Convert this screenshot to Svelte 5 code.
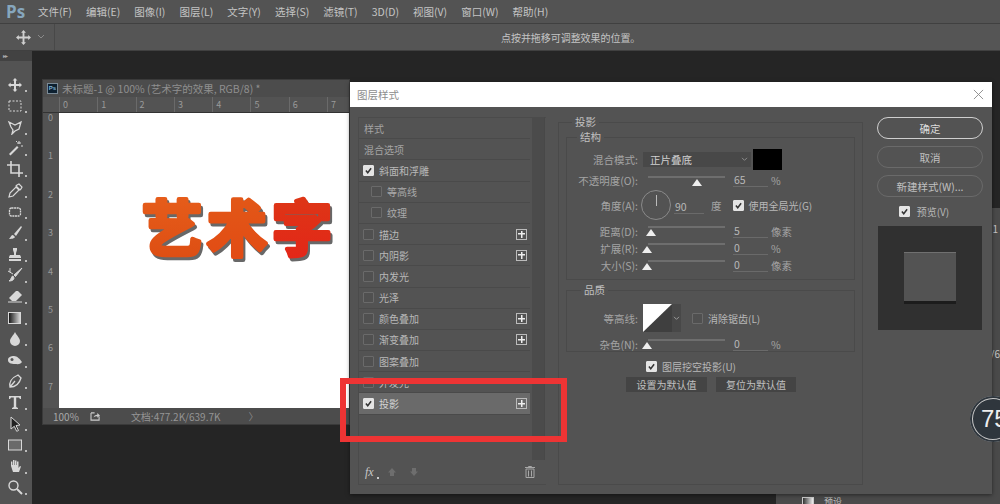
<script>
  const menus = ['文件(F)', '编辑(E)', '图像(I)', '图层(L)', '文字(Y)', '选择(S)', '滤镜(T)', '3D(D)', '视图(V)', '窗口(W)', '帮助(H)'];
  const styles = [
    { label: '样式', head: true },
    { label: '混合选项', head: true },
    { label: '斜面和浮雕', on: true },
    { label: '等高线', sub: true },
    { label: '纹理', sub: true },
    { label: '描边', plus: true },
    { label: '内阴影', plus: true },
    { label: '内发光' },
    { label: '光泽' },
    { label: '颜色叠加', plus: true },
    { label: '渐变叠加', plus: true },
    { label: '图案叠加' },
    { label: '外发光' },
    { label: '投影', on: true, plus: true, active: true }
  ];
  const rulerX = [0, 1, 2, 3, 4, 5, 6, 7];
  const tools = ['move', 'marquee', 'lasso', 'wand', 'crop', 'dropper', 'heal', 'brush', 'stamp', 'history', 'eraser', 'gradient', 'drop', 'smudge', 'pen', 'type', 'arrow', 'rect', 'hand', 'zoom'];
</script>

<div class="app">
  <header class="menubar">
    <span class="logo">Ps</span>
    <nav class="menus">
      {#each menus as m}<span>{m}</span>{/each}
    </nav>
  </header>
  <div class="optionbar">
    <svg class="opt-move" viewBox="0 0 16 16"><path d="M8 0l2.600 3H9v4h4V5.400L16 8l-3 2.600V9H9v4h1.600L8 16l-2.600-3H7V9H3v1.600L0 8l3-2.600V7h4V3H5.400z" fill="#d0d0d0"/></svg>
    <svg class="opt-chev" viewBox="0 0 8 6"><path d="M1 1l3 3 3-3" fill="none" stroke="#8a8a8a" stroke-width="1"/></svg>
    <span class="opt-div"></span>
    <span class="opt-msg">点按并拖移可调整效果的位置。</span>
  </div>
  <div class="workspace">
    <aside class="tools">
      <div class="tools-head">▸▸</div>
      <div class="tool-list">
        {#each tools as t}
          <div class="tool">
            <svg viewBox="0 0 16 16" width="16" height="16">
              {#if t === 'move'}<path d="M8 1l2.400 2.600H9V7h3.400V5.600L15 8l-2.600 2.400V9H9v3.400h1.400L8 15l-2.400-2.600H7V9H3.600v1.400L1 8l2.600-2.400V7H7V3.600H5.600z" fill="#d8d8d8"/>
              {:else if t === 'marquee'}<rect x="2" y="3" width="12" height="10" fill="none" stroke="#d8d8d8" stroke-dasharray="2 1.500"/>
              {:else if t === 'lasso'}<path d="M2 3l6 3 6-3-2 7-4 2-3 3 1-4-2-3z" fill="none" stroke="#d8d8d8" stroke-width="1.300"/>
              {:else if t === 'wand'}<path d="M2 14l8-8 1.500 1.500-8 8z" fill="#d8d8d8"/><path d="M12 1v3M10 3h4M14 6h2M9 1l1 1" stroke="#d8d8d8"/>
              {:else if t === 'crop'}<path d="M4 0v12h12M0 4h12v12" fill="none" stroke="#d8d8d8" stroke-width="1.600"/>
              {:else if t === 'dropper'}<path d="M2 14l1-4 6-6 3 3-6 6zM10 2l2-1 3 3-1 2-1 1-4-4z" fill="none" stroke="#d8d8d8" stroke-width="1.200"/>
              {:else if t === 'heal'}<rect x="2.500" y="4" width="11" height="8" rx="2" fill="none" stroke="#d8d8d8" stroke-width="1.300" stroke-dasharray="2 .6"/>
              {:else if t === 'brush'}<path d="M14 1L7 9l2 2 6-9zM6 10c-2 0-2 2-4 4 3 0 6-1 6-2z" fill="#d8d8d8"/>
              {:else if t === 'stamp'}<path d="M6 2h4v2l-1 3v2h4l1 2v1H2v-1l1-2h4V7L6 4zM2 13h12v2H2z" fill="#d8d8d8"/>
              {:else if t === 'history'}<path d="M15 1L7 8l1.500 1.500zM6 9c-2 0-1 3-4 5 3 0 5-1 5-3zM1 4l5 3M3 1v4" stroke="#d8d8d8" fill="#d8d8d8"/>
              {:else if t === 'eraser'}<path d="M2 10l7-7h2l4 4-6 6H5z" fill="#d8d8d8"/><path d="M1 14h14" stroke="#d8d8d8"/>
              {:else if t === 'gradient'}<defs><linearGradient id="gr"><stop offset="0" stop-color="#111"/><stop offset="1" stop-color="#ddd"/></linearGradient></defs><rect x="1.500" y="2.500" width="12" height="11" fill="url(#gr)" stroke="#d8d8d8"/>
              {:else if t === 'drop'}<path d="M8 1c2 4 5 6 5 9a5 5 0 0 1-10 0c0-3 3-5 5-9z" fill="#d8d8d8"/>
              {:else if t === 'smudge'}<path d="M1 8c0-3 3-4 6-4 3 0 6 3 8 6-2 3-5 2-7 2-4 0-7-1-7-4z" fill="#d8d8d8"/><circle cx="5" cy="7.500" r="1.500" fill="#555"/>
              {:else if t === 'pen'}<path d="M3 14c-1-4 1-9 8-12l3 3c-2 7-7 9-11 9z M3 14l5-6" fill="none" stroke="#d8d8d8" stroke-width="1.300"/>
              {:else if t === 'type'}<path d="M2 2h12v3h-1l-1-1.500H9.200v9.500L11 14v1H5v-1l1.800-1V3.500H4L3 5H2z" fill="#d8d8d8"/>
              {:else if t === 'arrow'}<path d="M4 1l9 8-4 .5 2.500 5-1.800.8-2.400-5L4 13z" fill="#222" stroke="#d8d8d8"/>
              {:else if t === 'rect'}<rect x="1.500" y="3" width="13" height="10" fill="#6a6a6a" stroke="#d8d8d8"/>
              {:else if t === 'hand'}<path d="M4 8V3.500h1.400V7h.6V2h1.500v5h.5V2.500h1.500V7h.5V3.500H11.500V10l1.500-2 1 .5-2 5.500H6z" fill="#d8d8d8"/>
              {:else}<circle cx="6.500" cy="6.500" r="4.500" fill="none" stroke="#d8d8d8" stroke-width="1.400"/><path d="M10 10l5 5" stroke="#d8d8d8" stroke-width="2"/>
              {/if}
            </svg>
            <i class="corner"></i>
          </div>
        {/each}
      </div>
    </aside>
    <div class="desk">
      <section class="doc">
        <div class="doc-title">
          <span class="ps-badge">Ps</span>
          <span>未标题-1 @ 100% (艺术字的效果, RGB/8) *</span>
        </div>
        <div class="ruler-h">
          {#each rulerX as n}<span>{n}</span>{/each}
        </div>
        <div class="doc-main">
          <div class="ruler-v">
            {#each rulerX as n}<span>{n}</span>{/each}
          </div>
          <div class="paper">
            <svg class="art" viewBox="0 0 290 295" width="290" height="295">
              <defs>
                <linearGradient id="ga" x1="0" y1="0" x2="0" y2="1"><stop offset="0" stop-color="#e8601c"/><stop offset="1" stop-color="#dc4c12"/></linearGradient>
                <linearGradient id="gb" x1="0" y1="0" x2="0" y2="1"><stop offset="0" stop-color="#e25a18"/><stop offset="1" stop-color="#e24a14"/></linearGradient>
                <linearGradient id="gc" x1="0" y1="0" x2="0" y2="1"><stop offset="0" stop-color="#dc3a16"/><stop offset="1" stop-color="#e42418"/></linearGradient>
              </defs>
              <text x="83" y="138" fill="url(#ga)" stroke="url(#ga)">艺</text>
              <text x="148" y="138" fill="url(#gb)" stroke="url(#gb)">术</text>
              <text x="213" y="138" fill="url(#gc)" stroke="url(#gc)">字</text>
            </svg>
          </div>
        </div>
        <div class="doc-status">
          <span class="zoom">100%</span>
          <svg viewBox="0 0 12 10" width="11" height="9"><path d="M1 1h4M1 1v8h9V5" fill="none" stroke="#ccc" stroke-width="1.200"/><path d="M4 6c0-2 2-3 4-3V1l3 3-3 2.500V4.800C6 4.800 5 5 4 6z" fill="#ccc"/></svg>
          <span class="docinfo">文档:477.2K/639.7K</span>
          <span class="chev">〉</span>
        </div>
      </section>

      <aside class="side-panel">
        <span class="side-mark m1">1</span>
        <span class="side-mark m2">/6</span>
        <div class="side-bottom"><i></i><span>预设</span></div>
      </aside>

      <section class="dialog">
        <div class="dlg-title">
          <span>图层样式</span>
          <svg viewBox="0 0 12 12" width="11" height="11"><path d="M1 1l10 10M11 1L1 11" stroke="#8a8a8a" stroke-width="1"/></svg>
        </div>
        <div class="dlg-body">
          <div class="list-col">
            <div class="style-list">
              {#each styles as s}
                <div class="row" class:active={s.active} class:sub={s.sub} class:head={s.head}>
                  {#if !s.head}<span class="cb" class:on={s.on}>{#if s.on}<svg viewBox="0 0 12 12"><path d="M2.500 6l2.500 3 4.500-6" fill="none" stroke="#333" stroke-width="2"/></svg>{/if}</span>{/if}
                  <span class="rlabel">{s.label}</span>
                  {#if s.plus}<span class="plus"></span>{/if}
                </div>
              {/each}
              <div class="list-foot">
                <span class="fx">fx<i></i></span>
                <svg viewBox="0 0 10 10" width="10" height="10"><path d="M5 1l4 4.500H7V9H3V5.500H1z" fill="#6e6e6e"/></svg>
                <svg class="down" viewBox="0 0 10 10" width="10" height="10"><path d="M5 9l4-4.500H7V1H3v3.500H1z" fill="#6e6e6e"/></svg>
                <svg class="trash" viewBox="0 0 10 12" width="10" height="12"><path d="M1 3h8v8.500H1zM0 1.500h10M3.500 1.500V.5h3v1M3.500 4.500v6M6.500 4.500v6" fill="none" stroke="#a8a8a8"/></svg>
              </div>
            </div>
            <div class="list-scroll"></div>
          </div>

          <fieldset class="outer">
            <legend>投影</legend>
            <fieldset class="group g1">
              <legend>结构</legend>
              <div class="form-row r-blend">
                <label>混合模式:</label>
                <span class="select"><b>正片叠底</b><svg viewBox="0 0 8 6" width="7" height="5"><path d="M1 1l3 3 3-3" fill="none" stroke="#999"/></svg></span>
                <span class="swatch"></span>
              </div>
              <div class="form-row r-op">
                <label>不透明度(O):</label>
                <span class="slider"><i class="thumb t-op"></i></span>
                <span class="num">65</span><span class="unit">%</span>
              </div>
              <div class="form-row r-angle">
                <label>角度(A):</label>
                <span class="dial"></span>
                <span class="num n-angle">90</span>
                <span class="unit u-angle">度</span>
                <span class="cb on"><svg viewBox="0 0 12 12"><path d="M2.500 6l2.500 3 4.500-6" fill="none" stroke="#333" stroke-width="2"/></svg></span>
                <span class="cblabel">使用全局光(G)</span>
              </div>
              <div class="form-row r-dist">
                <label>距离(D):</label>
                <span class="slider"><i class="thumb t-dist"></i></span>
                <span class="num">5</span><span class="unit">像素</span>
              </div>
              <div class="form-row r-small">
                <label>扩展(R):</label>
                <span class="slider"><i class="thumb t-zero"></i></span>
                <span class="num">0</span><span class="unit">%</span>
              </div>
              <div class="form-row r-small">
                <label>大小(S):</label>
                <span class="slider"><i class="thumb t-zero"></i></span>
                <span class="num">0</span><span class="unit">像素</span>
              </div>
            </fieldset>
            <fieldset class="group g2">
              <legend>品质</legend>
              <div class="form-row r-contour">
                <label>等高线:</label>
                <span class="contour"><svg viewBox="0 0 29 28" width="29" height="28"><rect width="29" height="28" fill="#fff"/><path d="M29 0v28H0z" fill="#3f3f3f"/></svg></span>
                <span class="contour-arrow"><svg viewBox="0 0 8 6" width="7" height="5"><path d="M1 1l3 3 3-3" fill="none" stroke="#aaa"/></svg></span>
                <span class="cb"></span>
                <span class="cblabel">消除锯齿(L)</span>
              </div>
              <div class="form-row r-noise">
                <label>杂色(N):</label>
                <span class="slider"><i class="thumb t-zero"></i></span>
                <span class="num">0</span><span class="unit">%</span>
              </div>
            </fieldset>
            <div class="knock">
              <span class="cb on"><svg viewBox="0 0 12 12"><path d="M2.500 6l2.500 3 4.500-6" fill="none" stroke="#333" stroke-width="2"/></svg></span>
              <span>图层挖空投影(U)</span>
            </div>
            <div class="defaults">
              <button>设置为默认值</button>
              <button>复位为默认值</button>
            </div>
          </fieldset>

          <div class="btn-col">
            <button class="pill primary">确定</button>
            <button class="pill">取消</button>
            <button class="pill">新建样式(W)...</button>
            <div class="preview-check">
              <span class="cb on"><svg viewBox="0 0 12 12"><path d="M2.500 6l2.500 3 4.500-6" fill="none" stroke="#333" stroke-width="2"/></svg></span>
              <span>预览(V)</span>
            </div>
            <div class="preview"><div class="swatch-prev"></div></div>
          </div>
        </div>
      </section>

      <div class="redbox"></div>
      <div class="meter"><span>75</span></div>
    </div>
  </div>
</div>

<style>
  :global(body) { margin: 0; background: #252525; }
  .app {
    width: 1000px; height: 504px; overflow: hidden; display: flex; flex-direction: column;
    font-family: "Noto Sans CJK SC", "Liberation Sans", sans-serif; font-size: 11px; color: #c0c0c0;
    background: #252525;
  }
  .menubar { height: 23px; flex: none; display: flex; align-items: center; background: #535353; border-bottom: 1px solid #404040; }
  .logo { width: 38px; padding-left: 6px; box-sizing: border-box; font: 700 17px "Open Sans", sans-serif; color: #86a6bd; }
  .menus { display: flex; gap: 14px; font-size: 10.500px; color: #c4c4c4; }
  .optionbar { height: 26px; flex: none; display: flex; align-items: center; background: #555; border-bottom: 1px solid #404040; position: relative; }
  .opt-move { width: 15px; height: 15px; margin-left: 16px; }
  .opt-chev { width: 8px; height: 6px; margin-left: 6px; }
  .opt-div { width: 1px; height: 26px; background: #484848; margin-left: 9px; }
  .opt-msg { margin-left: 446px; font-size: 10px; letter-spacing: -.05px; color: #c4c4c4; }
  .workspace { flex: 1; min-height: 0; display: flex; }
  .tools { width: 32px; flex: none; background: #535353; display: flex; flex-direction: column; }
  .tools-head { height: 10px; font-size: 6px; line-height: 10px; color: #aaa; padding-left: 3px; background: #424242; letter-spacing: -1px; }
  .tool-list { padding-top: 13px; display: flex; flex-direction: column; }
  .tool { height: 21.200px; display: flex; align-items: center; padding-left: 7px; position: relative; }
  .corner { position: absolute; left: 25px; bottom: 3px; width: 2px; height: 2px; background: #bbb; }
  .desk { flex: 1; position: relative; min-width: 0; }

  .doc { position: absolute; left: 11px; top: 29px; width: 306px; height: 344px; background: #535353; display: flex; flex-direction: column; box-shadow: 0 0 0 1px #3a3a3a; }
  .doc-title { height: 17px; display: flex; align-items: center; gap: 4px; padding-left: 4px; background: #4c4c4c; color: #8f8f8f; font-size: 10.500px; flex: none; }
  .ps-badge { width: 11px; height: 11px; background: #0d2030; color: #7fb2d4; border: 1px solid #7a8a96; box-sizing: border-box; font: 700 6px/9px "Liberation Sans", sans-serif; text-align: center; }
  .ruler-h { height: 16px; flex: none; background: #535353 repeating-linear-gradient(90deg, #6a6a6a 0 1px, transparent 1px 38.300px); background-position: 16px 0; padding-left: 20px; display: flex; box-sizing: border-box; border-bottom: 1px solid #333; font-size: 9px; line-height: 16px; color: #9a9a9a; }
  .ruler-h span { width: 38.300px; flex: none; }
  .doc-main { flex: 1; min-height: 0; display: flex; }
  .ruler-v { width: 16px; flex: none; background: #535353; display: flex; flex-direction: column; font-size: 9px; color: #9a9a9a; padding-left: 5px; box-sizing: border-box; }
  .ruler-v span { height: 38.400px; flex: none; line-height: 10px; }
  .paper { flex: 1; background: #fff; position: relative; }
  .art { position: absolute; left: 0; top: 0; filter: drop-shadow(2px 3px 0 #686868); overflow: visible; }
  .art text { font: 700 60px "Noto Sans CJK SC", sans-serif; stroke-width: 4.500px; stroke-linejoin: round; stroke-linecap: round; paint-order: stroke fill; }
  .doc-status { height: 16px; flex: none; display: flex; align-items: center; background: #4c4c4c; color: #a8a8a8; font-size: 10px; padding-left: 10px; }
  .doc-status svg { margin-left: 11px; }
  .docinfo { margin-left: 30px; color: #959595; }
  .chev { margin-left: 28px; color: #888; }

  .side-panel { position: absolute; right: 0; top: 157px; bottom: 0; width: 224px; background: #4a4a4a; }
  .side-mark { position: absolute; right: 2px; color: #c4c4c4; font-size: 10px; line-height: 10px; }
  .m1 { top: 16px; }
  .m2 { top: 141px; right: 0; }
  .side-bottom { position: absolute; left: 26px; bottom: -2px; display: flex; gap: 10px; align-items: center; font-size: 9px; line-height: 9px; color: #c0c0c0; }
  .side-bottom i { width: 12px; height: 9px; background: linear-gradient(90deg, #333, #eee); border: 1px solid #ccc; box-sizing: border-box; }

  .dialog { position: absolute; left: 318px; top: 31px; width: 642px; height: 412px; background: #535353; display: flex; flex-direction: column; box-shadow: 0 1px 4px rgba(0,0,0,.5); }
  .dlg-title { height: 25px; flex: none; background: #fff; color: #8d8d8d; font-size: 10.500px; display: flex; align-items: center; justify-content: space-between; padding: 0 8px 0 7px; }
  .dlg-body { flex: 1; display: flex; padding: 10px 6px 9px 8px; }
  .list-col { width: 187px; flex: none; display: flex; }
  .style-list { flex: 1; border: 1px solid #4b4b4b; border-right: none; display: flex; flex-direction: column; min-width: 0; }
  .row { height: 21.200px; flex: none; display: flex; align-items: center; gap: 5px; padding-left: 4px; border-bottom: 1px solid #4a4a4a; box-sizing: border-box; color: #b8b8b8; font-size: 10px; margin-right: 16px; }
  .row.head { padding-left: 5px; color: #a4a4a4; }
  .row.sub { padding-left: 12px; color: #aaa; }
  .row.active { background: #6a6a6a; color: #d4d4d4; }
  .rlabel { flex: 1; }
  .cb { width: 11px; height: 11px; flex: none; box-sizing: border-box; border: 1px solid #6a6a6a; background: #505050; display: inline-block; border-radius: 1px; }
  .cb.on { background: #e4e4e4; border-color: #e4e4e4; }
  .cb svg { display: block; width: 9px; height: 9px; }
  .plus { width: 11px; height: 11px; flex: none; margin-right: 3px; border: 1px solid #bbb; box-sizing: border-box; background: linear-gradient(#eee, #eee) center/7px 1.500px no-repeat, linear-gradient(#eee, #eee) center/1.500px 7px no-repeat; }
  .list-foot { margin-top: auto; height: 24px; display: flex; align-items: center; gap: 8px; padding: 0 6px 0 6px; }
  .fx { font: italic 12px "Liberation Serif", serif; color: #c8c8c8; position: relative; width: 14px; }
  .fx i { position: absolute; right: 0; bottom: 1px; width: 2px; height: 2px; background: #ccc; }
  .down { margin-left: 4px; }
  .trash { margin-left: auto; margin-right: 5px; }
  .list-scroll { width: 13px; flex: none; background: #4b4b4b; border-right: 1px solid #484848; margin-left: -14px; margin-bottom: 25px; box-sizing: border-box; }

  fieldset { margin: 0; min-width: 0; box-sizing: border-box; border: 1px solid #4a4a4a; }
  .outer { width: 305px; flex: none; margin: -2px 0 0 13px; padding: 0 7px 0 7px; align-self: stretch; }
  legend { padding: 0 3px; font-size: 10.500px; line-height: 14px; color: #c0c0c0; }
  .outer > legend { margin-left: 6px; }
  .group { padding: 0; margin-top: 1px; }
  .group legend { margin-left: 10px; }
  .g1 { height: 150px; padding-top: 5px; }
  .g2 { height: 69px; margin-top: 3px; padding-top: 4px; }
  .g2 legend { margin-left: 14px; }

  .form-row { display: flex; align-items: center; color: #a4a4a4; font-size: 10.500px; }
  .form-row label { width: 71px; flex: none; text-align: right; white-space: nowrap; }
  .r-blend { height: 21px; }
  .r-op { height: 21px; }
  .r-angle { height: 30px; margin-top: -1px; }
  .r-dist { height: 18px; margin-top: 2px; }
  .r-small { height: 17px; }
  .select { width: 108px; height: 15px; margin-left: 5px; background: #484848; display: flex; align-items: center; justify-content: space-between; padding: 0 3px 0 7px; box-sizing: border-box; }
  .select b { font-weight: 400; color: #d0d0d0; }
  .swatch { width: 29px; height: 21px; margin-left: 2px; background: #000; box-sizing: border-box; }
  .slider { width: 77px; height: 2px; margin-left: 10px; margin-bottom: 9px; background: #6e6e6e; position: relative; flex: none; }
  .r-op .slider { margin-bottom: 7px; }
  .thumb { position: absolute; top: 3px; width: 0; height: 0; border-left: 5px solid transparent; border-right: 5px solid transparent; border-bottom: 7px solid #eee; transform: translateX(-5px); }
  .t-op { left: 49px; }
  .t-dist { left: 3px; }
  .t-zero { left: -1px; }
  .num { width: 35px; margin-left: 8px; border-bottom: 1px solid #6a6a6a; height: 13px; line-height: 12px; padding-left: 1px; box-sizing: border-box; flex: none; color: #b8b8b8; }
  .unit { margin-left: 3px; color: #a4a4a4; }
  .dial { width: 30px; height: 30px; margin-left: 3px; border: 1px solid #8a8a8a; border-radius: 50%; box-sizing: border-box; flex: none; background: linear-gradient(#bbb, #bbb) center 4px/1px 11px no-repeat; }
  .n-angle { width: 30px; margin-left: 3px; margin-top: 4px; }
  .u-angle { margin-left: 7px; margin-right: 11px; }
  .cblabel { margin-left: 5px; color: #b8b8b8; font-size: 10px; }
  .r-contour { height: 30px; margin-top: 2px; }
  .r-contour .contour { margin-left: 5px; height: 28px; display: block; }
  .contour svg { display: block; }
  .contour-arrow { width: 9px; height: 28px; background: #484848; display: flex; align-items: center; justify-content: center; }
  .r-contour .cb { margin-left: 11px; }
  .r-noise { height: 22px; }
  .knock { display: flex; align-items: center; gap: 5px; margin: 6px 0 0 80px; height: 17px; color: #b8b8b8; font-size: 10px; }
  .defaults { display: flex; gap: 9px; margin: 2px 0 0 60px; }
  .defaults button { width: 81px; height: 15px; background: #444; border: 0; padding: 0; color: #c0c0c0; font: 10px "Noto Sans CJK SC", sans-serif; }
  .defaults button + button { width: 80px; }

  .btn-col { width: 106px; flex: none; margin-left: 14px; display: flex; flex-direction: column; }
  .pill { height: 22px; margin-bottom: 7px; border: 1px solid #6a6a6a; border-radius: 11px; background: transparent; padding: 0; color: #c0c0c0; font: 10.500px "Noto Sans CJK SC", sans-serif; }
  .pill.primary { border: 1px solid #cfcfcf; color: #dcdcdc; }
  .preview-check { display: flex; align-items: center; justify-content: center; gap: 7px; height: 16px; margin-top: -1px; padding-right: 12px; color: #b8b8b8; font-size: 10px; }
  .preview { margin-top: 7px; width: 104px; height: 104px; margin-left: 1px; background: #303030; display: flex; align-items: center; justify-content: center; }
  .swatch-prev { width: 52px; height: 52px; background: #535353; border-top: 1px solid #707070; border-bottom: 3px solid #1c1c1c; box-sizing: border-box; }

  .redbox { position: absolute; left: 308px; top: 327px; width: 227px; height: 64px; box-sizing: border-box; border: 6px solid #ee3434; pointer-events: none; }
  .meter { position: absolute; left: 938px; top: 345px; width: 46px; height: 46px; border-radius: 50%; background: #2f363d; box-shadow: inset 0 0 0 2px #2f363d, inset 0 0 0 3px #c8c8c8; color: #eee; font: 24px/46px "Liberation Sans", sans-serif; overflow: hidden; }
  .meter span { margin-left: 11px; }
</style>
